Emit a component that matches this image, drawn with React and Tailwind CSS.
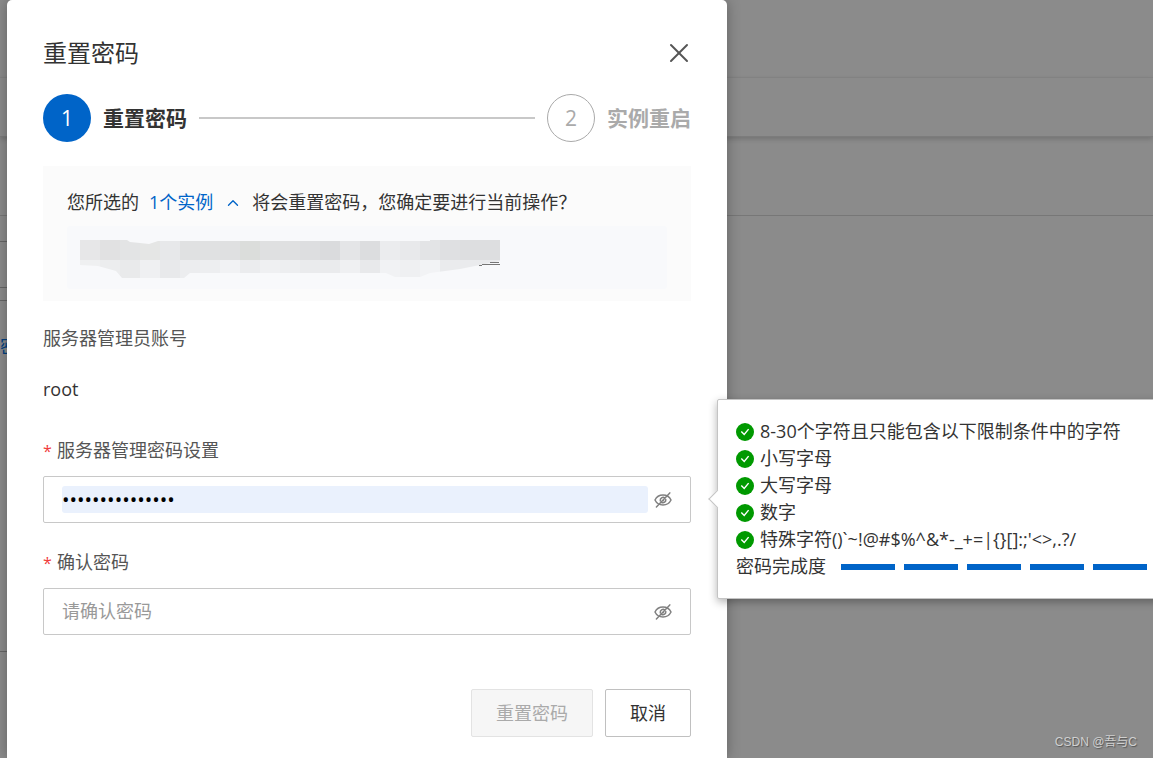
import React from "react";
import { X, ChevronUp } from "lucide-react";

const rules = [
  "8-30个字符且只能包含以下限制条件中的字符",
  "小写字母",
  "大写字母",
  "数字",
  "特殊字符()`~!@#$%^&*-_+=|{}[]:;'<>,.?/",
];

const upper = ["#e7e7e8", "#e1e1e2", "#e3e4e5", "#e5e6e5", "#e7e8ea", "#e0e1e2", "#e0e1e2", "#dfe0e1", "#dbdddb", "#dfe0e1", "#dfe0e1", "#dddee0", "#dadbdd", "#e4e5e7", "#dcdddf", "#ebecee", "#e8e9eb", "#e3e4e6", "#dfe0e2", "#dddee0", "#dddee0"];
const lower = ["#eff0f1", "#ecedee", "#e9eaeb", "#eff0f2", "#e8e9eb", "#ecedef", "#edeef0", "#f1f2f4", "#ebecee", "#eff0f2", "#edeef0", "#eaebed", "#eaebed", "#eff0f2", "#e8e9eb", "#f1f2f4", "#eff0f2", "#f2f3f5", "#eaebed", "#eaebed", "#e9eaec"];

function Mosaic() {
  return (
    <svg className="block h-[63px] w-[440px]" viewBox="67 226 440 63" aria-hidden="true">
      <clipPath id="smudge">
        <path d="M80 240H127L130 242L140 243L149 244L158 241H430V240H500V261L480 265L460 269L430 273L420 277H395L386 273H190L184 278H122L116 271L98 266L80 265Z" />
      </clipPath>
      <g clipPath="url(#smudge)" shapeRendering="crispEdges">
        {upper.map((c, i) => <rect key={i} x={80 + i * 20} y="240" width="20" height="20" fill={c} />)}
        {lower.map((c, i) => <rect key={i} x={80 + i * 20} y="260" width="20" height="20" fill={c} />)}
      </g>
      <path d="M479 265.500H482M482 264.500H500M490 262.500H499" stroke="#777" fill="none" />
    </svg>
  );
}

function EyeOff() {
  return (
    <svg className="size-[18px]" viewBox="0 0 18 18" fill="none" stroke="#808080" strokeWidth="1.5" strokeLinecap="round" aria-hidden="true">
      <path d="M1 9C2.600 5.600 5.600 4 9 4s6.400 1.600 8 5c-1.600 3.400-4.600 5-8 5S2.600 12.400 1 9Z" />
      <path d="M10.800 6.900A2.900 2.900 0 0 0 6.300 9.800M7.700 11.500A2.900 2.900 0 0 0 11.800 8.500M9 9.600l.8-.8M2.400 16 15.800 1.900" />
    </svg>
  );
}

function Check() {
  return (
    <svg className="size-[18px] shrink-0" viewBox="0 0 18 18" aria-hidden="true">
      <circle cx="9" cy="9" r="9" fill="#090" />
      <path d="m5.300 8.600 2.900 2.900 4.400-5.400" fill="none" stroke="#fff" strokeWidth="1.400" />
    </svg>
  );
}

function Field({ id, label, filled, placeholder, children }) {
  return (
    <div>
      <label htmlFor={id} className="flex items-center gap-1 text-[#555]">
        <span className="w-[10px] text-[16px] leading-5 text-[#f03c3c]">*</span>
        {label}
      </label>
      <div className="relative mt-3 flex h-[47px] items-center rounded-[2px] border border-[#c8c8c8] px-[18px]">
        <input
          id={id}
          type="password"
          defaultValue={filled ? "Abcdefgh1234567" : ""}
          placeholder={placeholder}
          className={
            "h-[27px] min-w-0 flex-1 rounded-[3px] text-black outline-none placeholder:text-[#999] " +
            (filled ? "bg-[#eaf1fd] text-[20px]" : "bg-transparent")
          }
        />
        <button type="button" aria-label="显示密码" className="ml-[6px]">
          <EyeOff />
        </button>
        {children}
      </div>
    </div>
  );
}

function Strength() {
  return (
    <div role="tooltip" className="absolute -top-[78px] left-full ml-[27px] rounded-[2px] border border-[#c4c4c4] bg-white px-[18px] py-[18px] whitespace-nowrap shadow-[0_3px_9px_rgba(0,0,0,0.3)]">
      <span className="absolute top-1/2 -left-[7px] size-[13px] -translate-y-1/2 rotate-45 border-b border-l border-[#c4c4c4] bg-white" />
      <ul>
        {rules.map((r) => (
          <li key={r} className="flex items-center gap-[6px]">
            <Check />
            {r}
          </li>
        ))}
      </ul>
      <div className="flex items-center gap-[15px]">
        密码完成度
        <div className="flex gap-[9px]">
          {[1, 2, 3, 4, 5].map((n) => <span key={n} className="h-[6px] w-[54px] bg-[#0064c8]" />)}
        </div>
      </div>
    </div>
  );
}

export default function App() {
  return (
    <div className="relative min-h-screen overflow-hidden bg-[#8b8b8b] pl-[7px] font-['Open_Sans','Noto_Sans_CJK_SC',sans-serif] text-[18px] leading-[27px] text-[#333]">
      <div className="absolute inset-0" aria-hidden="true">
        <div className="h-[78px] border-b border-[#868686]" />
        <div className="h-[59px] border-b border-[#7c7c7c] shadow-[0_2px_5px_rgba(0,0,0,0.18)]" />
        <div className="h-[79px] border-b border-[#777]" />
        <div className="w-[40px]">
          <div className="h-[26px] border-b border-[#666]" />
          <div className="h-[46px] border-b border-[#666]" />
          <div className="h-[13px] border-b border-[#666]" />
          <div className="h-[351px] border-b border-[#666] pt-[32px] text-[#003f80]">
            <span className="block">密码</span>
          </div>
        </div>
      </div>

      <main role="dialog" aria-labelledby="title" className="relative min-h-screen w-full max-w-[720px] rounded-t-[5px] bg-white px-[36px] pt-[35px] shadow-[0_0_14px_rgba(0,0,0,0.3)]">
        <header className="flex items-center justify-between">
          <h1 id="title" className="text-[24px] leading-[36px]">重置密码</h1>
          <button type="button" aria-label="关闭" className="text-[#555]">
            <X className="-mr-1 size-8" strokeWidth={1.5} />
          </button>
        </header>

        <ol className="mt-[23px] flex items-center gap-3">
          <li className="flex items-center gap-3">
            <span className="flex size-12 items-center justify-center rounded-full bg-[#0064c8] text-[21px] text-white">1</span>
            <strong className="text-[21px]">重置密码</strong>
          </li>
          <li className="h-[2px] flex-1 bg-[#c8c8c8]" aria-hidden="true" />
          <li className="flex items-center gap-3 text-[#aaa]">
            <span className="flex size-12 items-center justify-center rounded-full border border-[#aaa] text-[21px]">2</span>
            <strong className="text-[21px]">实例重启</strong>
          </li>
        </ol>

        <section className="mt-6 bg-[#fbfbfb] px-6 pt-[23px] pb-3">
          <p className="flex items-center">
            您所选的
            <button type="button" className="mx-[10px] flex items-center gap-[11px] text-[#0064c8]">
              1个实例
              <ChevronUp className="size-[18px]" strokeWidth={1.8} />
            </button>
            将会重置密码，您确定要进行当前操作？
          </p>
          <div className="mt-[10px] overflow-hidden rounded-[3px] bg-[#f8f9fb]">
            <Mosaic />
          </div>
        </section>

        <form onSubmit={(e) => e.preventDefault()}>
          <div className="mt-6 text-[#555]">服务器管理员账号</div>
          <div className="mt-6 mb-[34px]">root</div>
          <Field id="password" label="服务器管理密码设置" filled>
            <Strength />
          </Field>
          <div className="h-[26px]" />
          <Field id="confirm" label="确认密码" placeholder="请确认密码" />
          <div className="mt-[54px] flex justify-end gap-3 pb-5">
            <button type="submit" disabled className="h-12 rounded-[2px] border border-[#e3e3e3] bg-[#f6f6f6] px-6 text-[#aaa]">重置密码</button>
            <button type="button" className="h-12 rounded-[2px] border border-[#c0c0c0] bg-white px-6">取消</button>
          </div>
        </form>
      </main>
      <span className="absolute right-4 bottom-1 font-['Liberation_Sans','Noto_Sans_CJK_SC',sans-serif] text-[12px] leading-6 text-[#d0d0d0] [text-shadow:1px_1px_1px_#555]">CSDN @吾与C</span>
    </div>
  );
}
